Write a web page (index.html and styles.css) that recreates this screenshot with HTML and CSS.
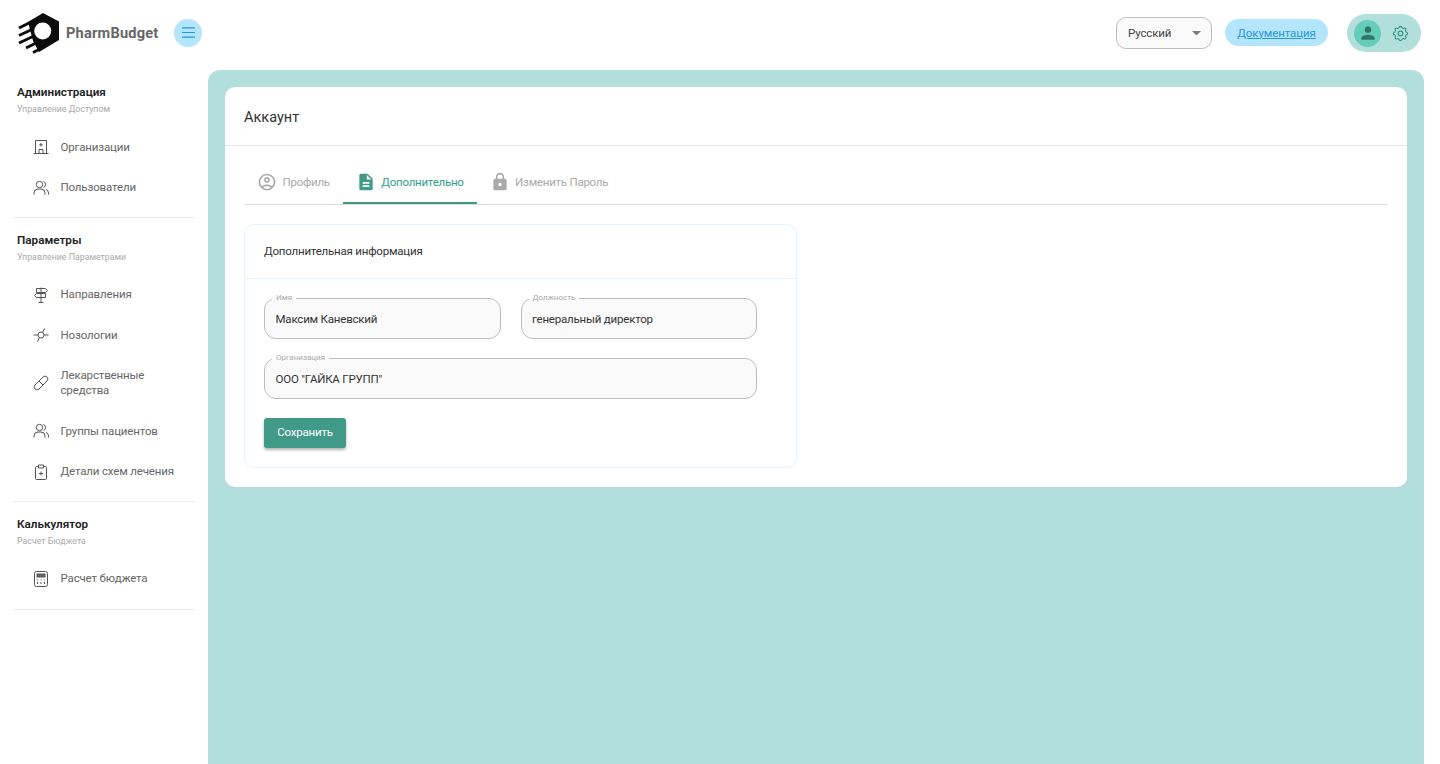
FILE: index.html
```html
<!DOCTYPE html>
<html lang="ru">
<head>
<meta charset="utf-8">
<title>PharmBudget</title>
<link rel="stylesheet" href="styles.css">
</head>
<body>
<header class="topbar">
  <div class="brand">
    <svg class="logo" viewBox="0 0 44 42" aria-hidden="true">
      <path d="M25 0 41 8.500V27L21 39 15 28 10 9Z" fill="#0c0c0c"/>
      <path d="M1 15 14 8.500M1 22.500 16 15.500M1 30 16 23M8 35 20 29M15 39.500 26 34" stroke="#0c0c0c" stroke-width="3" fill="none"/>
      <circle cx="24.700" cy="18" r="8.500" fill="#fff"/>
    </svg>
    <span class="brand-name">PharmBudget</span>
    <button class="menu-btn" aria-label="menu">
      <svg viewBox="0 0 14 12" class="menu-icon"><path d="M0 1h14M0 6h14M0 11h14" stroke="#2196e0" stroke-width="1.200" fill="none"/></svg>
    </button>
  </div>
  <div class="top-actions">
    <div class="lang"><span>Русский</span><svg class="caret" viewBox="0 0 10 5"><path d="M0 0h10L5 5z" fill="#7a7a7a"/></svg></div>
    <a class="docs" href="#">Документация</a>
    <div class="profile-pill">
      <span class="avatar"><svg viewBox="0 0 24 24" class="avatar-icon"><path d="M12 12c2.210 0 4-1.790 4-4s-1.790-4-4-4-4 1.790-4 4 1.790 4 4 4zm0 2c-2.670 0-8 1.340-8 4v2h16v-2c0-2.660-5.330-4-8-4z" fill="#2f7567"/></svg></span>
      <svg viewBox="0 0 24 24" class="gear"><path d="M10.325 4.317c.426-1.756 2.924-1.756 3.350 0a1.724 1.724 0 0 0 2.573 1.066c1.543-.940 3.310.826 2.370 2.370a1.724 1.724 0 0 0 1.065 2.572c1.756.426 1.756 2.924 0 3.350a1.724 1.724 0 0 0-1.066 2.573c.940 1.543-.826 3.310-2.370 2.370a1.724 1.724 0 0 0-2.572 1.065c-.426 1.756-2.924 1.756-3.350 0a1.724 1.724 0 0 0-2.573-1.066c-1.543.940-3.310-.826-2.370-2.370a1.724 1.724 0 0 0-1.065-2.572c-1.756-.426-1.756-2.924 0-3.350a1.724 1.724 0 0 0 1.066-2.573c-.940-1.543.826-3.310 2.370-2.370.996.608 2.296.070 2.572-1.065z" fill="none" stroke="#2f9484" stroke-width="1.400"/><circle cx="12" cy="12" r="3" fill="none" stroke="#2f9484" stroke-width="1.400"/></svg>
    </div>
  </div>
</header>
<div class="shell">
  <nav class="sidebar">
    <section class="nav-group">
      <h3 class="nav-title">Администрация</h3>
      <p class="nav-sub">Управление Доступом</p>
      <ul class="nav-list">
        <li class="nav-item"><svg class="nav-icon" viewBox="0 0 16 16"><path d="M.5 14.500h15M2.500 14.500V1.500h11v13M6 14.500V10.500h4v4M8 4v3.500M6.250 5.750h3.500"/></svg><span>Организации</span></li>
        <li class="nav-item"><svg class="nav-icon" viewBox="0 0 16 16"><circle cx="6.500" cy="4.500" r="3.200"/><path d="M1 14.500v-1.500a4 4 0 0 1 4-4h3a4 4 0 0 1 4 4v1.500M10.500 1.500a3.200 3.200 0 0 1 0 6M12.800 9.300a4 4 0 0 1 2.700 3.700v1.500"/></svg><span>Пользователи</span></li>
      </ul>
    </section>
    <section class="nav-group">
      <h3 class="nav-title">Параметры</h3>
      <p class="nav-sub">Управление Параметрами</p>
      <ul class="nav-list">
        <li class="nav-item"><svg class="nav-icon" viewBox="0 0 16 16"><path d="M8 .5v15M5.500 15.500h5M3.500 1.500h9l2 2-2 2h-9zM12.500 6.500h-9l-2 2 2 2h9z"/></svg><span>Направления</span></li>
        <li class="nav-item"><svg class="nav-icon" viewBox="0 0 16 16"><circle cx="8" cy="8" r="3"/><path d="M.5 8H5M11 8h4.500M11.500 1.500 9.500 5.500M6.500 10.500 4.500 14.500"/></svg><span>Нозологии</span></li>
        <li class="nav-item"><svg class="nav-icon" viewBox="0 0 16 16"><path d="M2 10 10 2a2.800 2.800 0 0 1 4 4l-8 8a2.800 2.800 0 0 1-4-4zM6 6l4 4"/></svg><span>Лекарственные<br>средства</span></li>
        <li class="nav-item"><svg class="nav-icon" viewBox="0 0 16 16"><circle cx="6.500" cy="4.500" r="3.200"/><path d="M1 14.500v-1.500a4 4 0 0 1 4-4h3a4 4 0 0 1 4 4v1.500M10.500 1.500a3.200 3.200 0 0 1 0 6M12.800 9.300a4 4 0 0 1 2.700 3.700v1.500"/></svg><span>Группы пациентов</span></li>
        <li class="nav-item"><svg class="nav-icon" viewBox="0 0 16 16"><path d="M5 2.500H3.500a1 1 0 0 0-1 1v11a1 1 0 0 0 1 1h9a1 1 0 0 0 1-1v-11a1 1 0 0 0-1-1H11M5.500 1h5v3h-5zM8 7.500v4M6 9.500h4"/></svg><span>Детали схем лечения</span></li>
      </ul>
    </section>
    <section class="nav-group">
      <h3 class="nav-title">Калькулятор</h3>
      <p class="nav-sub">Расчет Бюджета</p>
      <ul class="nav-list">
        <li class="nav-item"><svg class="nav-icon" viewBox="0 0 16 16"><rect x="1.500" y=".5" width="13" height="15" rx="2"/><rect class="calc-screen" x="4" y="3" width="8" height="3"/><path d="M4.500 8.500v.8M8 8.500v.8M11.500 8.500v.8M4.500 11v2M8 11v2M11.500 11v2"/></svg><span>Расчет бюджета</span></li>
      </ul>
    </section>
  </nav>
  <main class="main">
    <div class="card">
      <div class="card-head">Аккаунт</div>
      <div class="card-body">
        <div class="tabs">
          <div class="tab"><svg viewBox="0 0 24 24" class="tab-icon"><path d="M12 2C6.480 2 2 6.480 2 12s4.480 10 10 10 10-4.480 10-10S17.520 2 12 2zM7.350 18.500C8.660 17.560 10.260 17 12 17s3.340.56 4.650 1.500c-1.310.94-2.910 1.500-4.650 1.500s-3.340-.56-4.650-1.500zm10.790-1.380C16.450 15.800 14.320 15 12 15s-4.450.8-6.140 2.120C4.700 15.730 4 13.950 4 12c0-4.420 3.580-8 8-8s8 3.580 8 8c0 1.950-.7 3.730-1.860 5.120z"/><path d="M12 6c-1.930 0-3.500 1.570-3.500 3.500S10.070 13 12 13s3.500-1.570 3.500-3.500S13.930 6 12 6zm0 5c-.83 0-1.500-.67-1.500-1.500S11.170 8 12 8s1.500.67 1.500 1.500S12.830 11 12 11z"/></svg><span class="tab-label">Профиль</span></div>
          <div class="tab tab-active"><svg viewBox="0 0 24 24" class="tab-icon"><path d="M14 2H6c-1.100 0-1.990.9-1.990 2L4 20c0 1.100.89 2 1.990 2H18c1.100 0 2-.9 2-2V8l-6-6zm2 16H8v-2h8v2zm0-4H8v-2h8v2zm-3-5V3.500L18.500 9H13z"/></svg><span class="tab-label">Дополнительно</span></div>
          <div class="tab"><svg viewBox="0 0 24 24" class="tab-icon"><path d="M18 8h-1V6c0-2.760-2.240-5-5-5S7 3.240 7 6v2H6c-1.100 0-2 .9-2 2v10c0 1.100.9 2 2 2h12c1.100 0 2-.9 2-2V10c0-1.100-.9-2-2-2zm-6 9c-1.100 0-2-.9-2-2s.9-2 2-2 2 .9 2 2-.9 2-2 2zm3.100-9H8.900V6c0-1.710 1.390-3.100 3.100-3.100 1.710 0 3.100 1.390 3.100 3.100v2z"/></svg><span class="tab-label">Изменить Пароль</span></div>
        </div>
        <div class="form-card">
          <div class="form-head">Дополнительная информация</div>
          <div class="form-body">
            <div class="fields">
              <fieldset class="field"><legend>Имя</legend><div class="value">Максим Каневский</div></fieldset>
              <fieldset class="field"><legend>Должность</legend><div class="value">генеральный директор</div></fieldset>
              <fieldset class="field field-wide"><legend>Организация</legend><div class="value">ООО "ГАЙКА ГРУПП"</div></fieldset>
            </div>
            <button class="save">Сохранить</button>
          </div>
        </div>
      </div>
    </div>
  </main>
</div>
</body>
</html>
```
FILE: styles.css
```css
* { box-sizing: border-box; }
html, body { margin: 0; height: 764px; overflow: hidden; background: #fff; }
body { font-family: Roboto, "Liberation Sans", sans-serif; color: #333; }

.topbar { height: 70px; display: flex; align-items: center; justify-content: space-between; padding: 0 19px 4px 18px; }
.brand { display: flex; align-items: center; margin-top: -1px; }
.logo { width: 44px; height: 42px; margin-top: 2px; margin-right: 4px; }
.brand-name { font-size: 14.600px; font-weight: 700; color: #666; width: 108px; letter-spacing: .2px; }
.menu-btn { width: 28px; height: 28px; border: 0; padding: 0; border-radius: 50%; background: #b3e5fc; display: flex; align-items: center; justify-content: center; }
.menu-icon { width: 13px; height: 11px; }

.top-actions { display: flex; align-items: center; }
.lang { width: 96px; height: 32px; border: 1px solid #bdbdbd; border-radius: 10px; background: #fafafa; display: flex; align-items: center; justify-content: space-between; padding: 0 10px 0 11px; font-size: 11.500px; letter-spacing: -.15px; color: #444; }
.caret { width: 9px; height: 4.500px; }
.docs { margin-left: 13px; margin-top: -1px; width: 103px; height: 27px; border-radius: 14px; background: #b3e5fc; color: #2a96d8; font-size: 11.500px; letter-spacing: -.1px; display: flex; align-items: center; justify-content: center; }
.profile-pill { margin-left: 19px; width: 74px; height: 38px; border-radius: 19px; background: #b2dfdb; display: flex; align-items: center; padding-left: 7px; gap: 10px; }
.avatar { width: 27px; height: 27px; border-radius: 50%; background: #66cdbb; display: flex; align-items: center; justify-content: center; }
.avatar-icon { width: 20px; height: 20px; }
.gear { width: 19px; height: 19px; }

.shell { display: flex; height: 694px; }
.sidebar { width: 208px; padding: 0 13px; flex: none; }
.nav-group { border-bottom: 1px solid #eaeaea; padding: 14px 0 9.500px; }
.nav-group:last-child { padding-bottom: 10.500px; }
.nav-title { margin: 0 0 2px 4px; font-size: 11.700px; line-height: 16px; font-weight: 600; color: #222; }
.nav-sub { margin: 0 0 10px 4px; font-size: 8.800px; line-height: 14px; color: #aaa; }
.nav-list { list-style: none; margin: 0; padding: 0; }
.nav-item { display: flex; align-items: center; gap: 12px; padding: 13.500px 0 12px 19.500px; font-size: 11.500px; letter-spacing: -.15px; line-height: 15px; color: #666; }
.nav-icon { width: 16px; height: 16px; margin: -1px 0; flex: none; fill: none; stroke: #555; stroke-width: 1; }
.calc-screen { fill: #666; }

.main { width: 1216px; flex: none; background: #b2dfdb; border-radius: 12px 12px 0 0; padding: 17px; }
.card { background: #fff; border-radius: 10px; height: 400px; }
.card-head { height: 59px; border-bottom: 1px solid #e8e8e8; padding: 1px 19px 0; font-size: 14.500px; line-height: 59px; color: #333; }
.card-body { padding: 0 19px; }
.tabs { display: flex; align-items: flex-start; height: 59px; border-bottom: 1px solid #ddd; }
.tab { display: flex; align-items: center; gap: 5.500px; padding: 14px 13px 0 13px; font-size: 11.500px; letter-spacing: -.25px; color: #aaa; height: 58px; }
.tab-icon { width: 20px; height: 20px; fill: #aaa; flex: none; }
.tab-active { color: #2f9d8a; border-bottom: 2px solid #419a87; padding-top: 16px; }
.tab-active .tab-icon { fill: #419a87; }

.form-card { margin-top: 19px; width: 553px; height: 244px; border: 1px solid #e3f2fd; border-radius: 10px; }
.form-head { height: 54px; border-bottom: 1px solid #e3f2fd; padding: 0 19px; line-height: 52px; font-size: 11.500px; letter-spacing: -.2px; color: #333; }
.form-body { padding: 14px 19px; }
.fields { display: grid; grid-template-columns: 236.500px 236.500px; gap: 14px 20px; }
.field { margin: 0; padding: 0 11px; height: 46px; border: 1px solid #bdbdbd; border-radius: 12px; background: #fafafa; min-width: 0; }
.field-wide { grid-column: 1 / 3; }
.field legend { padding: 0 4px; margin-left: -4px; font-size: 8px; line-height: 10px; color: #aaa; }
.value { font-size: 11.500px; letter-spacing: -.2px; line-height: 30px; padding-top: 1px; color: #333; margin-left: -0.500px; }
.save { margin-top: 19px; display: block; width: 82px; height: 30px; border: 0; border-radius: 3px; background: #419a87; color: #fff; font-family: inherit; font-size: 11.500px; letter-spacing: -.2px; padding: 0 0 2px; box-shadow: 0 2px 3px rgba(0,0,0,.3); }
```
